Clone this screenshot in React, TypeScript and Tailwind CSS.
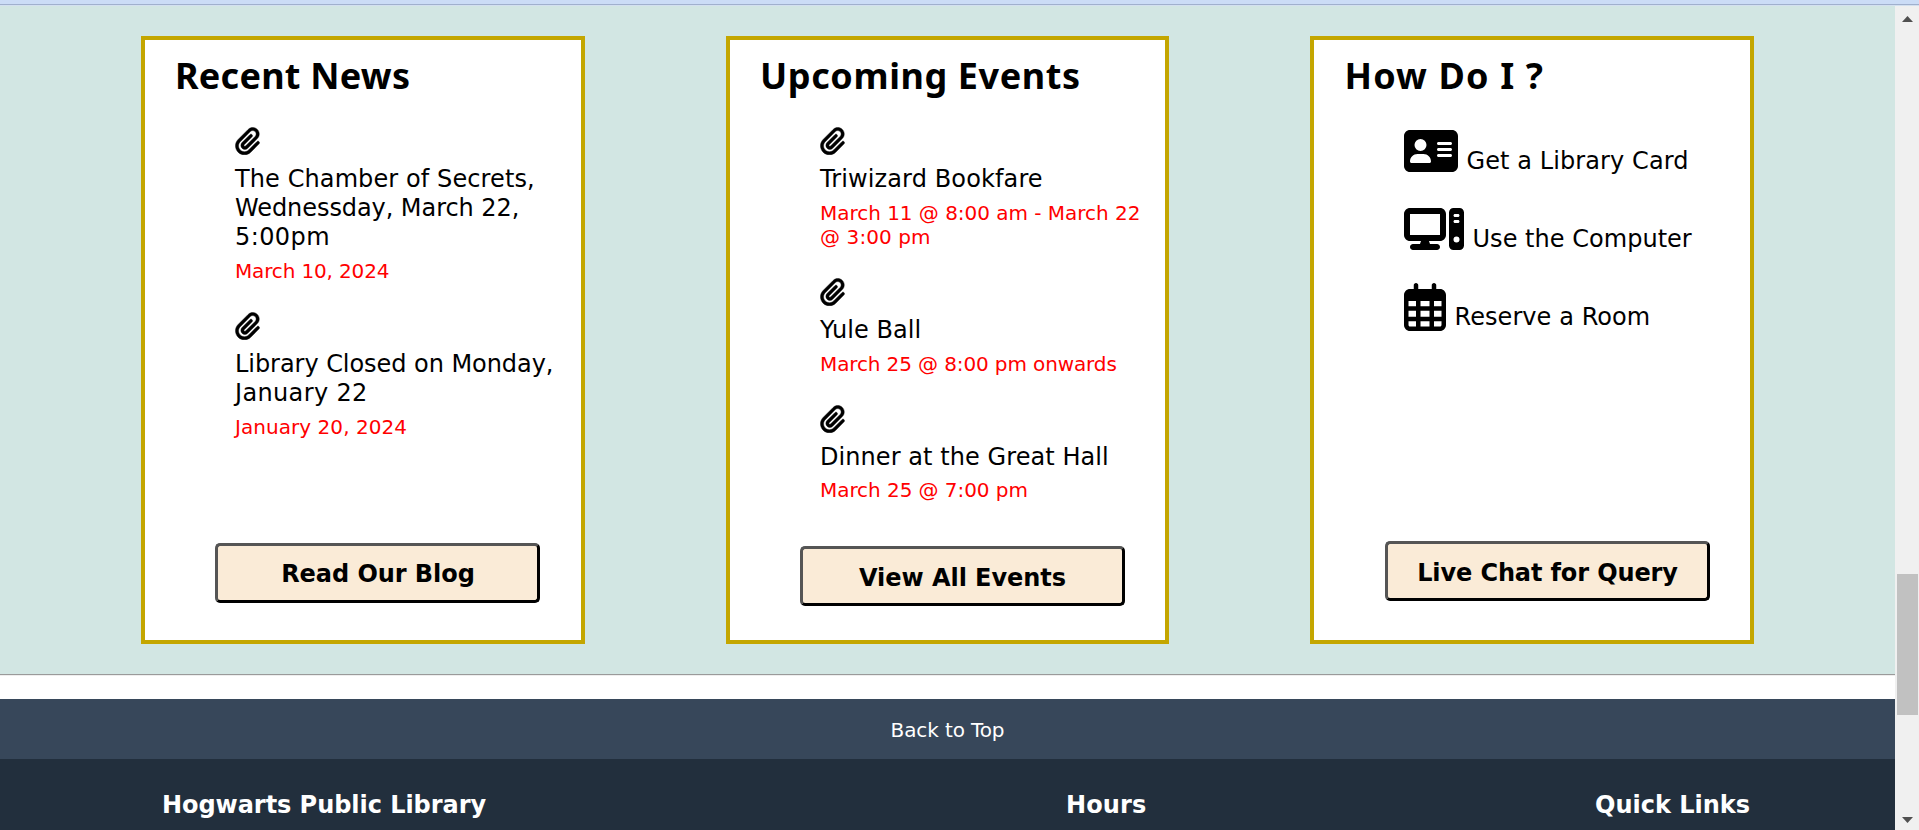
import React from "react";
import type { ReactNode } from "react";
import type { IconType } from "react-icons";
import { FaAddressCard, FaComputer, FaPaperclip, FaRegCalendarDays } from "react-icons/fa6";

type Line = { text: string; tracking?: string };
type Entry = { title: Line[]; date: Line[]; dateMargin?: string };

const news: Entry[] = [
  {
    title: [
      { text: "The Chamber of Secrets,", tracking: "tracking-[0.1px]" },
      { text: "Wednessday, March 22,", tracking: "tracking-[-0.07px]" },
      { text: "5:00pm", tracking: "tracking-[0.4px]" },
    ],
    date: [{ text: "March 10, 2024", tracking: "tracking-[-0.15px]" }],
  },
  {
    title: [
      { text: "Library Closed on Monday,", tracking: "tracking-[-0.05px]" },
      { text: "January 22", tracking: "tracking-[0.35px]" },
    ],
    date: [{ text: "January 20, 2024", tracking: "tracking-[0.05px]" }],
  },
];

const events: Entry[] = [
  {
    title: [{ text: "Triwizard Bookfare", tracking: "tracking-[0.12px]" }],
    date: [
      { text: "March 11 @ 8:00 am - March 22", tracking: "tracking-[-0.03px]" },
      { text: "@ 3:00 pm", tracking: "tracking-[0.1px]" },
    ],
  },
  {
    title: [{ text: "Yule Ball", tracking: "tracking-[0.06px]" }],
    date: [{ text: "March 25 @ 8:00 pm onwards", tracking: "tracking-[-0.12px]" }],
  },
  {
    title: [{ text: "Dinner at the Great Hall", tracking: "tracking-[0.07px]" }],
    date: [{ text: "March 25 @ 7:00 pm", tracking: "tracking-[-0.06px]" }],
    dateMargin: "mt-1.5",
  },
];

const helpLinks: { icon: IconType; width: string; text: string; tracking: string }[] = [
  { icon: FaAddressCard, width: "w-[54px]", text: "Get a Library Card", tracking: "tracking-[0.09px]" },
  { icon: FaComputer, width: "w-[60px]", text: "Use the Computer", tracking: "tracking-[0.03px]" },
  { icon: FaRegCalendarDays, width: "w-[42px]", text: "Reserve a Room", tracking: "tracking-[0.07px]" },
];

function Lines({ lines }: { lines: Line[] }) {
  return (
    <>
      {lines.map((line) => (
        <span key={line.text} className={`block whitespace-nowrap ${line.tracking ?? ""}`}>
          {line.text}
        </span>
      ))}
    </>
  );
}

function EntryList({ entries }: { entries: Entry[] }) {
  return (
    <ul className="flex flex-col gap-[29px] pl-[90px]">
      {entries.map((entry) => (
        <li key={entry.title[0].text}>
          <FaPaperclip className="block h-7 w-[25px] stroke-black stroke-[8]" />
          <p className="mt-2.5 text-2xl leading-[29px]">
            <Lines lines={entry.title} />
          </p>
          <p className={`text-xl leading-6 text-[#ff0000] ${entry.dateMargin ?? "mt-[7px]"}`}>
            <Lines lines={entry.date} />
          </p>
        </li>
      ))}
    </ul>
  );
}

type CardProps = {
  heading: string;
  headingClass: string;
  className: string;
  button: string;
  buttonClass: string;
  children: ReactNode;
};

function Card({ heading, headingClass, className, button, buttonClass, children }: CardProps) {
  return (
    <section className={`flex h-[608px] flex-col border-4 border-[#c4a600] bg-white pt-3 ${className}`}>
      <h2
        className={`mb-[27px] whitespace-nowrap font-['Noto_Sans',sans-serif] text-4xl leading-[48px] font-bold ${headingClass}`}
      >
        {heading}
      </h2>
      {children}
      <button
        className={`mt-auto h-[60px] w-[325px] shrink-0 rounded-[5px] border-[3px] border-t-[#555] border-r-black border-b-black border-l-[#555] bg-[#faebd7] text-2xl leading-[52px] font-bold whitespace-nowrap ${buttonClass}`}
      >
        {button}
      </button>
    </section>
  );
}

function Scrollbar() {
  return (
    <div className="flex w-6 flex-col items-center bg-[#f0f0f0] pt-2.5 pb-[7px]">
      <svg className="block h-[6px] w-[11px]" viewBox="0 0 11 6" fill="#505050">
        <path d="M5.5 0 11 6H0z" />
      </svg>
      <div className="mt-[552px] h-[141px] w-[21px] bg-[#c1c1c1]" />
      <svg className="mt-auto block h-[6px] w-[11px]" viewBox="0 0 11 6" fill="#505050">
        <path d="M0 0h11L5.5 6z" />
      </svg>
    </div>
  );
}

export default function App() {
  return (
    <div className="flex h-[830px] w-[1919px] flex-col overflow-hidden bg-white font-['DejaVu_Sans',sans-serif] text-black">
      <div className="h-1 shrink-0 bg-[#cbdcf6]" />
      <div className="h-px shrink-0 bg-[#a0b0cd]" />
      <div className="h-px shrink-0 bg-[#d3e0f0]" />
      <div className="flex min-h-0 flex-1">
        <div className="flex w-[1895px] flex-col">
          <main className="flex h-[668px] shrink-0 items-start bg-[#d2e6e3] pt-[30px] pl-[141px]">
            <Card
              heading="Recent News"
              headingClass="pl-[30px] tracking-[0.25px]"
              className="w-[444px] pb-[37px]"
              button="Read Our Blog"
              buttonClass="ml-[70px] pt-0.5 pl-px tracking-[-0.05px]"
            >
              <EntryList entries={news} />
            </Card>
            <Card
              heading="Upcoming Events"
              headingClass="pl-[30px] tracking-[0.6px]"
              className="ml-[141px] w-[443px] pb-[34px]"
              button="View All Events"
              buttonClass="ml-[70px] pt-[3px] tracking-[-0.05px]"
            >
              <EntryList entries={events} />
            </Card>
            <Card
              heading="How Do I ?"
              headingClass="pl-[30.5px] tracking-[1.14px]"
              className="ml-[141px] w-[444px] pb-[39px]"
              button="Live Chat for Query"
              buttonClass="ml-[71px] pt-[3px] tracking-[-0.12px]"
            >
              <ul className="flex flex-col gap-[30px] pl-[90px]">
                {helpLinks.map(({ icon: Icon, width, text, tracking }) => (
                  <li key={text} className="flex h-12 items-end gap-[8.5px]">
                    <Icon className={`block h-12 ${width}`} />
                    <span className={`-mb-px text-2xl leading-[29px] whitespace-nowrap ${tracking}`}>{text}</span>
                  </li>
                ))}
              </ul>
            </Card>
          </main>
          <hr className="h-0.5 shrink-0 border-t border-b border-t-[#9a9a9a] border-b-[#eeeeee]" />
          <a className="mt-[23px] block h-[60px] shrink-0 bg-[#37475a] pt-px text-center text-xl leading-[61px] tracking-[-0.11px] text-white">
            Back to Top
          </a>
          <footer className="flex flex-1 bg-[#222f3d] pt-8 pl-[162px] text-2xl leading-[29px] font-bold whitespace-nowrap text-white">
            <h3 className="w-[904px] tracking-[-0.05px]">Hogwarts Public Library</h3>
            <h3 className="w-[529px] tracking-[0.1px]">Hours</h3>
            <h3>Quick Links</h3>
          </footer>
        </div>
        <Scrollbar />
      </div>
    </div>
  );
}
